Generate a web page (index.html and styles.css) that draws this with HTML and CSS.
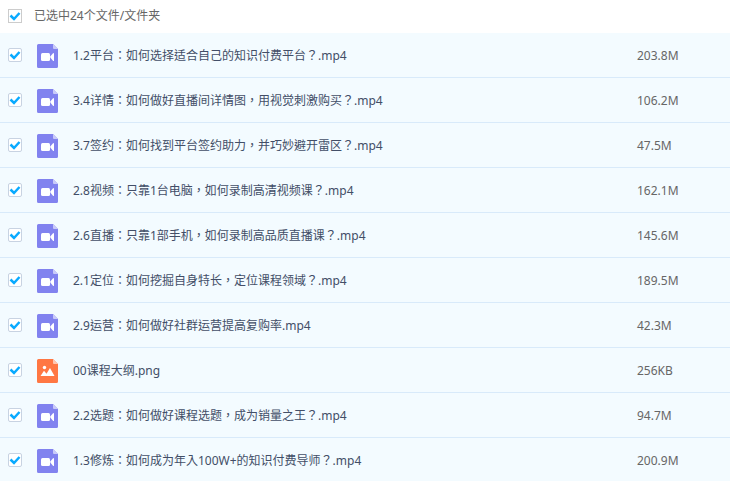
FILE: index.html
```html
<!DOCTYPE html>
<html lang="zh-CN">
<head>
    <meta charset="UTF-8">
    <meta name="viewport" content="width=device-width, initial-scale=1.0">
    <title>文件列表</title>
    <link rel="stylesheet" href="styles.css">
</head>
<body>
    <!-- shared file icons -->
    <svg class="icon-defs" width="0" height="0" aria-hidden="true">
        <symbol id="icon-video" viewBox="0 0 21 24">
            <path fill="#8182ef" d="M1.5 0H16l5 5v17.5a1.5 1.5 0 0 1-1.5 1.5h-18A1.5 1.5 0 0 1 0 22.5v-21A1.5 1.5 0 0 1 1.5 0z"/>
            <path fill="#c9caf9" d="M16 0l5 5h-4a1 1 0 0 1-1-1z"/>
            <rect fill="#fff" x="4" y="9" width="9" height="8" rx="1.5"/>
            <path fill="#fff" d="M13.4 12.2l2.6-3q1-.6 1 .4v6.8q0 1-1 .4l-2.6-3z"/>
        </symbol>
        <symbol id="icon-image" viewBox="0 0 21 24">
            <path fill="#ff7743" d="M1.5 0H16l5 5v17.5a1.5 1.5 0 0 1-1.5 1.5h-18A1.5 1.5 0 0 1 0 22.5v-21A1.5 1.5 0 0 1 1.5 0z"/>
            <path fill="#ffc6b0" d="M16 0l5 5h-4a1 1 0 0 1-1-1z"/>
            <circle fill="#fff" cx="7.5" cy="8.5" r="1.7"/>
            <path fill="#fff" d="M3.5 17L7 11.8l2.5 3L13 9l4.5 8z"/>
        </symbol>
    </svg>

    <div class="toolbar">
        <input type="checkbox" class="check check-all" id="checkAll" checked>
        <label for="checkAll">已选中24个文件/文件夹</label>
    </div>

    <table class="file-list">
        <tbody>
            <tr>
                <td class="col-check"><input type="checkbox" class="check" id="f1" checked></td>
                <td class="col-icon"><svg class="icon"><use href="#icon-video"/></svg></td>
                <td class="col-name"><label for="f1">1.2平台：如何选择适合自己的知识付费平台？.mp4</label></td>
                <td class="col-size">203.8M</td>
            </tr>
            <tr>
                <td class="col-check"><input type="checkbox" class="check" id="f2" checked></td>
                <td class="col-icon"><svg class="icon"><use href="#icon-video"/></svg></td>
                <td class="col-name"><label for="f2">3.4详情：如何做好直播间详情图，用视觉刺激购买？.mp4</label></td>
                <td class="col-size">106.2M</td>
            </tr>
            <tr>
                <td class="col-check"><input type="checkbox" class="check" id="f3" checked></td>
                <td class="col-icon"><svg class="icon"><use href="#icon-video"/></svg></td>
                <td class="col-name"><label for="f3">3.7签约：如何找到平台签约助力，并巧妙避开雷区？.mp4</label></td>
                <td class="col-size">47.5M</td>
            </tr>
            <tr>
                <td class="col-check"><input type="checkbox" class="check" id="f4" checked></td>
                <td class="col-icon"><svg class="icon"><use href="#icon-video"/></svg></td>
                <td class="col-name"><label for="f4">2.8视频：只靠1台电脑，如何录制高清视频课？.mp4</label></td>
                <td class="col-size">162.1M</td>
            </tr>
            <tr>
                <td class="col-check"><input type="checkbox" class="check" id="f5" checked></td>
                <td class="col-icon"><svg class="icon"><use href="#icon-video"/></svg></td>
                <td class="col-name"><label for="f5">2.6直播：只靠1部手机，如何录制高品质直播课？.mp4</label></td>
                <td class="col-size">145.6M</td>
            </tr>
            <tr>
                <td class="col-check"><input type="checkbox" class="check" id="f6" checked></td>
                <td class="col-icon"><svg class="icon"><use href="#icon-video"/></svg></td>
                <td class="col-name"><label for="f6">2.1定位：如何挖掘自身特长，定位课程领域？.mp4</label></td>
                <td class="col-size">189.5M</td>
            </tr>
            <tr>
                <td class="col-check"><input type="checkbox" class="check" id="f7" checked></td>
                <td class="col-icon"><svg class="icon"><use href="#icon-video"/></svg></td>
                <td class="col-name"><label for="f7">2.9运营：如何做好社群运营提高复购率.mp4</label></td>
                <td class="col-size">42.3M</td>
            </tr>
            <tr>
                <td class="col-check"><input type="checkbox" class="check" id="f8" checked></td>
                <td class="col-icon"><svg class="icon"><use href="#icon-image"/></svg></td>
                <td class="col-name"><label for="f8">00课程大纲.png</label></td>
                <td class="col-size">256KB</td>
            </tr>
            <tr>
                <td class="col-check"><input type="checkbox" class="check" id="f9" checked></td>
                <td class="col-icon"><svg class="icon"><use href="#icon-video"/></svg></td>
                <td class="col-name"><label for="f9">2.2选题：如何做好课程选题，成为销量之王？.mp4</label></td>
                <td class="col-size">94.7M</td>
            </tr>
            <tr>
                <td class="col-check"><input type="checkbox" class="check" id="f10" checked></td>
                <td class="col-icon"><svg class="icon"><use href="#icon-video"/></svg></td>
                <td class="col-name"><label for="f10">1.3修炼：如何成为年入100W+的知识付费导师？.mp4</label></td>
                <td class="col-size">200.9M</td>
            </tr>
        </tbody>
    </table>
</body>
</html>
```
FILE: styles.css
```css
* {
    box-sizing: border-box;
}
body {
    margin: 0;
    background-color: #fff;
    color: #424e67;
    font-family: "Noto Sans", "Noto Sans CJK TC", sans-serif;
    font-size: 12px;
    line-height: 16px;
    /* centred full-width punctuation */
    font-feature-settings: "locl" 0;
}
.icon-defs {
    display: block;
}
.toolbar {
    display: flex;
    align-items: center;
    gap: 12px;
    height: 33px;
    padding: 0 8px 2px;
    color: #666;
}
.check {
    appearance: none;
    display: block;
    width: 14px;
    height: 14px;
    margin: 0;
    border: 1px solid #c8d3e2;
    border-radius: 2px;
    background-color: #fff;
    cursor: pointer;
}
.check-all {
    border-color: #ccc;
    border-radius: 0;
}
.check:checked {
    background-image: url("data:image/svg+xml,%3Csvg xmlns='http://www.w3.org/2000/svg' viewBox='0 0 12 12'%3E%3Cpath d='M1.5 5.5L5 9l5.5-6' fill='none' stroke='%2309aaff' stroke-width='2.5'/%3E%3C/svg%3E");
}
.file-list {
    width: 100%;
    table-layout: fixed;
    border-collapse: separate;
    border-spacing: 0;
}
.file-list td {
    height: 45px;
    padding: 2px 0 0;
    border-bottom: 1px solid #d8eafa;
    background-color: #f3fbff;
    vertical-align: middle;
}
.file-list .col-check {
    width: 37px;
    padding: 0 0 0 8px;
}
.file-list .col-icon {
    width: 36px;
}
.file-list .col-size {
    width: 93px;
    color: #666;
}
.icon {
    display: block;
    width: 21px;
    height: 24px;
}
```
